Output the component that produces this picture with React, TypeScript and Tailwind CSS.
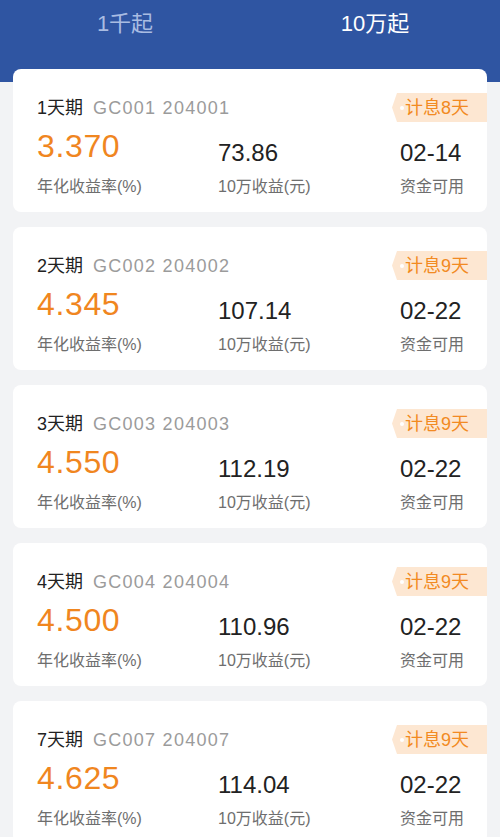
const products = [
  { term: '1天期', code: 'GC001 204001', days: 8, rate: '3.370', income: '73.86', date: '02-14' },
  { term: '2天期', code: 'GC002 204002', days: 9, rate: '4.345', income: '107.14', date: '02-22' },
  { term: '3天期', code: 'GC003 204003', days: 9, rate: '4.550', income: '112.19', date: '02-22' },
  { term: '4天期', code: 'GC004 204004', days: 9, rate: '4.500', income: '110.96', date: '02-22' },
  { term: '7天期', code: 'GC007 204007', days: 9, rate: '4.625', income: '114.04', date: '02-22' },
];

type Product = (typeof products)[number];

function ProductCard({ p }: { p: Product }) {
  return (
    <li className="bg-white rounded-[8px] h-[143px] pt-[24px] overflow-hidden">
      <div className="flex items-center justify-between h-[29px] pl-[24px]">
        <p className="flex items-center leading-none">
          <span className="text-[18px] text-[#222]">{p.term}</span>
          <span className="text-[18px] text-[#9b9b9b] ml-[10px] tracking-[0.07em]">{p.code}</span>
        </p>
        <div className="relative h-[29px] w-[95px] bg-[#fde7d2] [clip-path:polygon(5px_0,100%_0,100%_100%,5px_100%,0_50%)] flex items-center pl-[13px]">
          <span className="absolute left-[8px] top-[12.5px] w-[4px] h-[4px] rounded-full bg-white" />
          <span className="text-[18px] leading-none text-[#f28a22]">计息{p.days}天</span>
        </div>
      </div>

      <div className="grid grid-cols-[181px_182px_1fr] pl-[24px]">
        <div>
          <div className="h-[43px] pt-[8px]">
            <p className="text-[32px] leading-none text-[#f0861f] tracking-[0.02em]">{p.rate}</p>
          </div>
          <p className="mt-[12px] text-[16px] leading-[20px] text-[#6e6e6e]">年化收益率(%)</p>
        </div>
        <div>
          <div className="h-[43px] pt-[19px]">
            <p className="text-[24px] leading-none text-[#222]">{p.income}</p>
          </div>
          <p className="mt-[12px] text-[16px] leading-[20px] text-[#6e6e6e]">10万收益(元)</p>
        </div>
        <div>
          <div className="h-[43px] pt-[19px]">
            <p className="text-[24px] leading-none text-[#222]">{p.date}</p>
          </div>
          <p className="mt-[12px] text-[16px] leading-[20px] text-[#6e6e6e]">资金可用</p>
        </div>
      </div>
    </li>
  );
}

export default function App() {
  return (
    <div className="min-h-[837px] bg-[#f2f3f5] font-['Liberation_Sans','Noto_Sans_CJK_SC',sans-serif]">
      <div className="h-[82px] bg-[#2f55a2]">
        <div className="flex h-[48px]">
          <button className="flex-1 text-[22px] leading-[48px] text-[#a9bce2]">1千起</button>
          <button className="flex-1 text-[22px] leading-[48px] text-white">10万起</button>
        </div>
      </div>
      <ul className="relative -mt-[13px] px-[13px] flex flex-col gap-[15px] pb-4">
        {products.map((p) => (
          <ProductCard key={p.term} p={p} />
        ))}
      </ul>
    </div>
  );
}
